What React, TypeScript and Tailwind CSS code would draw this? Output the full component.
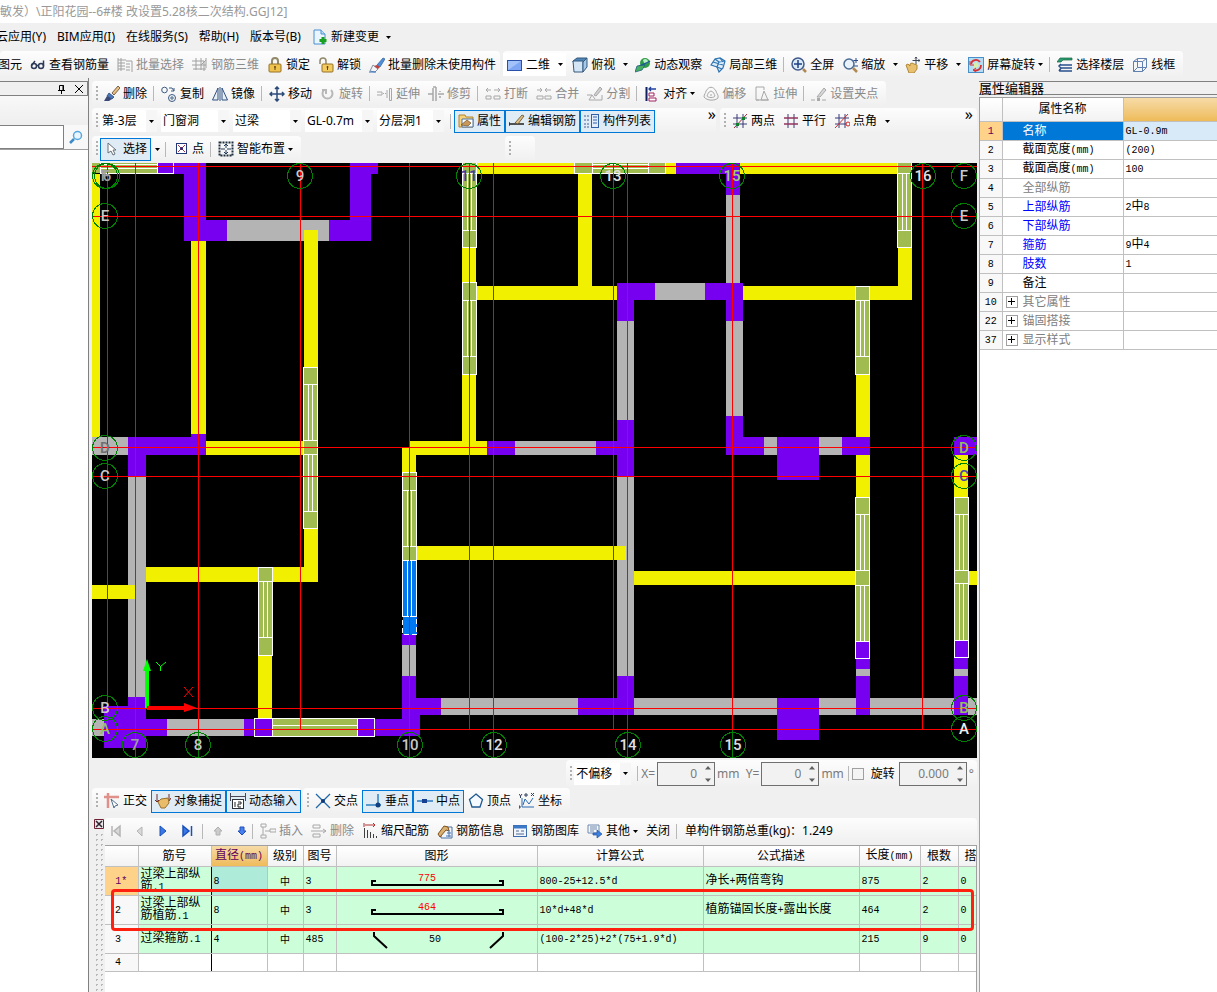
import { Fragment, type ReactNode } from 'react';
import clsx from 'clsx';

const glass = (
  <>
    <circle cx="7" cy="7" r="5" fill="#e8f2fb" stroke="#4a6a94" strokeWidth="1.5" />
    <path d="M11 11l4 4" stroke="#b08850" strokeWidth="2.5" />
  </>
);

const brush = (
  <>
    <path d="M8 7L14 0l2 2-6 7z" fill="#e8c080" stroke="#5a4030" strokeWidth=".8" />
    <path d="M5 7l5 4-2 2-5-3z" fill="#4a78b8" stroke="#244a80" strokeWidth=".8" />
    <path d="M3 10l5 3-3 2H0z" fill="#3a4a78" />
  </>
);

const grid = <path d="M5 1v14M11 1v14M1 5h14M1 11h14" stroke="#3a3a78" fill="none" />;

const icons: Record<string, ReactNode> = {
  newChange: (
    <>
      <path d="M2 1h7l4 4v10H2z" fill="#eaf5ff" stroke="#4a90d0" />
      <path d="M9 1v4h4" fill="#b8dcf8" stroke="#4a90d0" />
      <path d="M11 8v7M7.500 11.500h7" stroke="#18a020" strokeWidth="3" />
    </>
  ),
  glasses: (
    <g fill="none" stroke="#2c3a58" strokeWidth="1.5">
      <circle cx="4" cy="9" r="2.500" />
      <circle cx="11" cy="9" r="2.500" />
      <path d="M1.500 8.500L5 4M13.500 9V3.500M6.500 8.500h2" />
    </g>
  ),
  batch: (
    <path d="M1 1v13M1 3h8M1 6h7M1 9h7M1 12h7M4 1v13M9 4h6v11M9 7h4M9 10h4M9 13h4" fill="none" stroke="#a0a0a0" />
  ),
  rebar3d: (
    <path d="M0 4h12v10M4 1v12M9 1v12M14 1v10M0 8h14M1 12h13M9 8l5-5" fill="none" stroke="#a0a0a0" />
  ),
  lock: (
    <>
      <path d="M5 7V4a3 3 0 0 1 6 0v3" fill="none" stroke="#908868" strokeWidth="2" />
      <rect x="2" y="7" width="12" height="8" rx="1" fill="#efc24e" stroke="#96702a" />
      <path d="M8 9v4M7 10h2" stroke="#604010" />
    </>
  ),
  unlock: (
    <>
      <path d="M2 7V4a3 3 0 0 1 6 0v3" fill="none" stroke="#908868" strokeWidth="1.500" />
      <rect x="4" y="7" width="11" height="8" rx="1" fill="#f3cb5e" stroke="#96702a" />
      <path d="M9.500 9v4M8.500 10h2" stroke="#604010" />
    </>
  ),
  clean: (
    <>
      <path d="M8 8l6-7 2 1-5 8z" fill="#5090d8" stroke="#2a5a9a" strokeWidth=".7" />
      <path d="M4 8l5 4-3 3-5-1z" fill="#f4f4f4" stroke="#8090a8" />
      <path d="M8 8l3 2-2 2-4-3z" fill="#c04040" />
      <path d="M0 15h7" stroke="#3070c0" />
    </>
  ),
  flat: (
    <>
      <rect x=".5" y="3.500" width="14" height="10" fill="#a4c2fa" stroke="#2a50a8" />
      <path d="M1 13L14 4v9z" fill="#7ea6f4" />
    </>
  ),
  cube: (
    <>
      <path d="M1 4l4-3h10l-4 4H1z" fill="#4f86b8" stroke="#34587c" />
      <path d="M1 4h10v11H2z" fill="#d4e6f6" stroke="#34587c" />
      <path d="M11 5l4-4v9l-4 5z" fill="#a4c8e8" stroke="#34587c" />
    </>
  ),
  orbit: (
    <>
      <circle cx="10" cy="6" r="5" fill="#309c48" />
      <path d="M8 3c2-2 4-1 5 1s-3 3-4 2z" fill="#b8ecc4" />
      <path d="M2 13C2 8 9 8 15 4" stroke="#205a98" strokeWidth="1.500" fill="none" />
      <path d="M0 15l2-6 8-1-3 5z" fill="#48b060" stroke="#206080" strokeWidth=".8" />
    </>
  ),
  local3d: (
    <g fill="#dcecf8" stroke="#2f74b0" strokeWidth="1.200">
      <path d="M1 8l4-6 5-1 5 3-2 7-4 4-2-5z" />
      <path d="M5 2l4 3-2 5M10 1l3 4M3 5l10 3M9 5l6-1M9 5l-2 5 5 2" fill="none" />
    </g>
  ),
  full: (
    <>
      <circle cx="7" cy="7" r="6" fill="#dcebf8" stroke="#405a8c" strokeWidth="1.500" />
      <path d="M7 3v8M3 7h8" stroke="#204080" strokeWidth="1.500" />
      <path d="M12 12l3 3" stroke="#b08850" strokeWidth="2.500" />
    </>
  ),
  zoom: (
    <>
      {glass}
      <path d="M14 1v5M11.500 3.500h5M12 9h4" stroke="#2a4a8a" />
    </>
  ),
  pan: (
    <>
      <path d="M1 8l2-1 2 2V7l2-1 2 1 3 1v4l-3 4H4z" fill="#e8c070" stroke="#b08838" />
      <path d="M11 0v7M7.500 3.500h7M10 1.500L11 0l1 1.500M13.500 2.500l1.500 1-1.500 1" stroke="#404858" fill="none" />
    </>
  ),
  screenRotate: (
    <>
      <rect x=".5" y=".5" width="15" height="15" fill="#b4dcf4" stroke="#4a90c8" />
      <path d="M5 7l4-2 2 4-5 3z" fill="#d8f0a8" />
      <path d="M3 7a5 5 0 0 1 9-2M13 8a5 5 0 0 1-7 5" fill="none" stroke="#d83030" strokeWidth="1.800" />
      <path d="M2 4v4h4M8 11l-3 2 3 2" fill="none" stroke="#d83030" />
    </>
  ),
  floors: (
    <>
      <path d="M0 5l3-4h12v2H6L4 5z" fill="#2aa070" stroke="#186040" strokeWidth=".7" />
      <path d="M3 8h12M3 11h12M2 14h13M4 7l-2 2 2 2-2 3" stroke="#28508c" strokeWidth="1.500" fill="none" />
    </>
  ),
  wire: (
    <g fill="none" stroke="#6080b0">
      <path d="M1.500 4.500h9v10h-9zM5.500 1.500h9v9h-9zM1.500 4.500l4-3M10.500 4.500l4-3M10.500 14.500l4-4M1.500 14.500l4-4" />
    </g>
  ),
  brush,
  copy: (
    <g fill="none" stroke="#3a5a80">
      <circle cx="3.500" cy="4" r="2.800" />
      <circle cx="11" cy="12" r="3.500" />
      <circle cx="11" cy="12" r="1.200" />
      <path d="M8 2h3l2 3M13 2v3h-3" />
    </g>
  ),
  mirror: (
    <path d="M6 2v12H.500zM10 2v12h5.500zM8 1v14" fill="#e8f0f8" stroke="#305080" />
  ),
  move: (
    <path d="M8 1v14M1 8h14M6 3l2-2 2 2M6 13l2 2 2-2M3 6L1 8l2 2M13 6l2 2-2 2" fill="none" stroke="#2a4a78" strokeWidth="1.500" />
  ),
  rotate: <path d="M4 4a5 5 0 1 0 7 0M2 4h4v4" fill="none" stroke="#b8b8b8" strokeWidth="2" />,
  extend: <path d="M0 6h5v3H0M6 7.500h1M8 7.500h1M10 4v8M12.500 2.500h2v12h-2z" fill="none" stroke="#a8a8a8" />,
  trim: <path d="M0 8h5M5 2v13M8 1v14M10 8h6M12 5v1M12 10v2M5 1h3" fill="none" stroke="#a8a8a8" strokeWidth="1.500" />,
  breakIt: (
    <path d="M1 4h5M3 2L1 4l2 2M9 4h6M13 2l2 2-2 2M1 10h5v3H1zM9 10h6v3H9z" fill="none" stroke="#a8a8a8" />
  ),
  join: (
    <path d="M1 4h5M4 2l2 2-2 2M9 4h6M11 2L9 4l2 2M1 10h6v3H1zM9 10h6v3H9z" fill="none" stroke="#a8a8a8" />
  ),
  split: (
    <>
      <path d="M0 9h5l-3 5h13V9M5 9l3 4" fill="none" stroke="#a8a8a8" />
      <path d="M7 9l6-8 2 2-6 7z" fill="#d0d0d0" stroke="#a8a8a8" />
    </>
  ),
  align: (
    <>
      <path d="M2.500 1v14" stroke="#102060" strokeWidth="2" />
      <path d="M5 7h5v3H5zM5 12h7v3H5z" fill="#fff" stroke="#a02060" />
      <path d="M12 3H5M7 1L5 3l2 2" fill="none" stroke="#2040a0" strokeWidth="1.300" />
    </>
  ),
  offset: (
    <g fill="none" stroke="#a8a8a8">
      <path d="M1 11c0-3 2-4 2-6 3-5 7-5 10 0 0 2 3 4 2 7-3 3-11 3-14-1z" />
      <path d="M4 10c1-2 1-4 4-5 3 1 3 3 4 5-1 2-7 2-8 0zM7 9h2" />
    </g>
  ),
  stretch: <path d="M2 1h8v3M2 1v13h3M7 14l3-9 4 9zM2 14h13" fill="none" stroke="#a8a8a8" />,
  grip: (
    <>
      <path d="M0 14h4M11 14h4" stroke="#a8a8a8" />
      <rect x="6" y="12" width="3" height="3" fill="#a8a8a8" />
      <path d="M6 11l7-9 2 2-6 7z" fill="#d8d8d8" stroke="#a8a8a8" />
    </>
  ),
  props: (
    <>
      <path d="M1 2h6l1 2h7v10H1z" fill="#f7d27a" stroke="#b08430" />
      <path d="M4 6h11v8H4z" fill="#fff" stroke="#50709c" />
      <path d="M3 12l6-5 4 3-3 3z" fill="#c89858" stroke="#705028" strokeWidth=".7" />
    </>
  ),
  editRebar: (
    <>
      <path d="M0 11h15M0 9v4" stroke="#202020" strokeWidth="1.300" />
      <path d="M6 10l7-8 2 1-6 8z" fill="#e0c080" stroke="#604828" strokeWidth=".8" />
    </>
  ),
  list: (
    <>
      <path d="M0 3h2M3 3h2M0 7h2M3 7h2M0 11h2M3 11h2M0 14h2M3 14h2" stroke="#4060a0" />
      <rect x="7.500" y="1.500" width="7" height="13" fill="#e0ecfa" stroke="#3060a8" />
      <path d="M9 4h4M9 7h4M9 10h4" stroke="#3060a8" />
    </>
  ),
  twoPoints: (
    <>
      {grid}
      <path d="M2 15L15 1" stroke="#a03030" />
      <path d="M4 10h3v3H4zM10 4h3v3h-3z" fill="#108030" />
    </>
  ),
  parallel: (
    <>
      {grid}
      <path d="M1 5h14M1 11h14" stroke="#c03050" />
    </>
  ),
  pointAngle: (
    <>
      {grid}
      <path d="M1 15L14 1" stroke="#d03030" />
      <circle cx="14" cy="11" r="2" fill="#fff" stroke="#d02020" />
    </>
  ),
  cursor: <path d="M4 2v10l3-2 2 4 2-1-2-4h3z" fill="#fff" stroke="#687078" />,
  point: (
    <>
      <rect x="3.500" y="2.500" width="10" height="10" fill="#fff" stroke="#203878" />
      <path d="M5 4l7 7M12 4l-7 7" stroke="#a83050" />
      <circle cx="8.500" cy="7.500" r="1.500" fill="#202878" />
    </>
  ),
  smart: (
    <>
      <rect x="1.500" y="1.500" width="13" height="13" fill="none" stroke="#203040" strokeWidth="2" strokeDasharray="2 1" />
      <path d="M8 3v4M8 9v4M3 8h4M9 8h4M6 5l2-2 2 2M6 11l2 2 2-2" stroke="#203858" fill="none" />
    </>
  ),
  ortho: (
    <>
      <path d="M0 4h15M4 0v15" stroke="#e09088" strokeWidth="2.500" />
      <path d="M7 6l7 6-3 1-1 2z" fill="#fff" stroke="#50708c" />
    </>
  ),
  snap: (
    <>
      <path d="M2 1v8M14 1v6M0 7l2 2 2-2M11 5l3 3 2-3" stroke="#702828" fill="none" />
      <path d="M3 9l3-3 7-1 1 5-4 5H6z" fill="#e8bc68" stroke="#9a7030" />
    </>
  ),
  dynInput: (
    <>
      <path d="M.500 0v8M15.500 0v8M0 3.500h16" stroke="#484858" />
      <rect x="2.500" y="6.500" width="11" height="9" fill="#fff" stroke="#303038" />
      <path d="M5 9v5M8 9h3v2H8v3h3" stroke="#202020" fill="none" />
    </>
  ),
  cross: (
    <>
      <path d="M1 1l14 14M15 1L1 15" stroke="#2068a8" strokeWidth="1.300" />
      <circle cx="8" cy="8" r="2" fill="#103878" />
    </>
  ),
  perp: (
    <>
      <path d="M0 12h15M12 1v11" stroke="#3080c0" strokeWidth="1.500" />
      <circle cx="12" cy="12" r="2.500" fill="#104080" />
    </>
  ),
  mid: (
    <>
      <path d="M0 8h16" stroke="#2878c0" strokeWidth="1.500" />
      <rect x="5" y="6" width="5" height="4" fill="#184090" />
    </>
  ),
  vertex: <path d="M8 1l6.500 5.500L12 14H4L1.500 6.500z" fill="#f4faff" stroke="#205890" strokeWidth="1.300" />,
  coord: (
    <>
      <path d="M3 5v9M3 14h12M4 12l2-6 4 5 4-6" fill="none" stroke="#2868b0" />
      <path d="M0 1l1.500 2L3 1M1.500 3v2M12 0l3 3M15 0l-3 3M6 1h2v2H6zM0 13h1v2H0z" fill="none" stroke="#304060" />
    </>
  ),
  first: <path d="M4 3v10M12 3L6 8l6 5z" fill="#d8d8d8" stroke="#b4b4b4" strokeWidth="1.500" />,
  prev: <path d="M10 4L5 8l5 5z" fill="#d8d8d8" stroke="#b4b4b4" />,
  next: <path d="M4 3l6 5-6 5z" fill="#3a78e8" stroke="#1850b8" />,
  last: <path d="M3 3l6 5-6 5zM11.500 3v10" fill="#3a78e8" stroke="#1850b8" strokeWidth="1.500" />,
  up: <path d="M8 4l4 4h-2v4H6V8H4z" fill="#ccc" stroke="#b0b0b0" />,
  down: <path d="M8 12l4-4h-2V4H6v4H4z" fill="#4880f0" stroke="#2050b8" />,
  insert: <path d="M1 1h5v3H1zM1 12h5v3H1zM3 4v8M5 8h5M10 6h6v3h-6z" fill="none" stroke="#a8a8a8" />,
  remove: <path d="M2 2h7v3H2zM0 8h15M12 6l3 2-3 2M2 11h7v3H2z" fill="none" stroke="#a8a8a8" />,
  scale: (
    <>
      <path d="M3 2h10M11 0l2 2-2 2M2 0v4" fill="none" stroke="#b03030" />
      <path d="M2.500 5v10M5.500 7v8M8.500 9v6M11.500 11v4M14.500 13v2" stroke="#404040" />
    </>
  ),
  info: (
    <>
      <path d="M8 4h7v11H4V9" fill="#eef4fc" stroke="#4870a8" />
      <path d="M1 11l6-8 4 1 1 4-3-1-6 7z" fill="#d8b070" stroke="#805018" />
      <path d="M10 10h4M9 13h5M12 7v7" stroke="#4870a8" />
    </>
  ),
  library: (
    <>
      <rect x="1.500" y="2.500" width="13" height="11" fill="#f0f6fc" stroke="#3c6cae" />
      <path d="M1 4h14" stroke="#3c78c8" strokeWidth="3" />
      <path d="M4 8h3M9 8h3M4 11h8" stroke="#506890" />
    </>
  ),
  other: (
    <>
      <path d="M1 2h11v8H1zM3 4h7M3 6h7M3 8h4" fill="#f4f8fc" stroke="#7088b0" />
      <path d="M6 10h4V7l5 4-5 4v-3H6z" fill="#3c80e0" stroke="#1c50a0" strokeWidth=".7" />
    </>
  ),
};

function Icon({ name }: { name: string }) {
  return (
    <svg viewBox="0 0 16 16" className="size-4 shrink-0" aria-hidden="true">
      {icons[name]}
    </svg>
  );
}

function Arrow() {
  return (
    <svg viewBox="0 0 5 3" className="h-[3px] w-[5px] shrink-0" aria-hidden="true">
      <path d="M0 0h5L2.500 3z" fill="#000" />
    </svg>
  );
}

interface ToolProps {
  icon?: string;
  label?: string;
  title?: string;
  active?: boolean;
  disabled?: boolean;
  menu?: 'tight' | 'split';
}

function Tool({ icon, label, title, active, disabled, menu }: ToolProps) {
  return (
    <>
      <button
        aria-label={label ? undefined : title}
        disabled={disabled}
        className={clsx(
          'flex h-[23px] shrink-0 items-center gap-[3px] border px-[3px]',
          active ? 'border-[#0078d7] bg-[#dfebf5]' : 'border-transparent',
          disabled && 'text-[#8a8a8a]',
        )}
      >
        {icon && <Icon name={icon} />}
        {label}
        {menu === 'tight' && <Arrow />}
      </button>
      {menu === 'split' && (
        <button aria-label={`${label}选项`} className="flex h-[23px] w-3 shrink-0 items-center justify-center">
          <Arrow />
        </button>
      )}
    </>
  );
}

function Sep() {
  return <span className="mx-[2px] h-[15px] w-[2px] shrink-0 border-l border-[#b8b8b8]" />;
}

function Grip() {
  return (
    <svg viewBox="0 0 8 16" className="h-4 w-2 shrink-0" aria-hidden="true">
      <path d="M5 0v16" stroke="#b0b0b0" strokeWidth="2" strokeDasharray="2 2" />
    </svg>
  );
}

function Bar({ className, children }: { className?: string; children?: ReactNode }) {
  return (
    <div className={clsx('flex items-center rounded-sm bg-linear-to-b from-[#fdfdfd] to-[#f0f0f0]', className)}>
      {children}
    </div>
  );
}

function Combo({ label, value, className }: { label: string; value: string; className: string }) {
  return (
    <label className={clsx('mr-1 flex h-[22px] shrink-0 bg-white', className)}>
      <select aria-label={label} className="min-w-0 flex-1 appearance-none pl-[2px] outline-none">
        <option>{value}</option>
      </select>
      <span className="flex w-[11px] items-center justify-center bg-[#f6f6f6]">
        <Arrow />
      </span>
    </label>
  );
}

function Spin({ label, value, className }: { label: string; value: string; className: string }) {
  return (
    <span className={clsx('flex h-6 shrink-0 items-center border border-[#707070] bg-[#f2f2f2] text-[#7a7a7a]', className)}>
      <input aria-label={label} defaultValue={value} className="w-0 flex-1 text-right outline-none" />
      <svg viewBox="0 0 17 22" className="h-[22px] w-[17px]" aria-hidden="true">
        <path d="M8 6.500h6L11 3zM8 15.500h6L11 19z" fill="#606060" />
      </svg>
    </span>
  );
}

// CJK glyphs are 12px wide, latin ones half of that
function Song({ text }: { text: string }) {
  return (
    <>
      {text.split(/([ -~]+)/).map((part, i) =>
        /^[ -~]+$/.test(part) ? (
          <span key={i} className="font-['Liberation_Mono',monospace] text-[10px]">{part}</span>
        ) : (
          <Fragment key={i}>{part}</Fragment>
        ),
      )}
    </>
  );
}

const YELLOW = '#f0f000';
const PURPLE = '#7800f0';
const GRAY = '#b4b4b4';
const OLIVE = '#a0bc50';
const BLUE = '#0078f0';

// [x1, y1, x2, y2]
type Box = [number, number, number, number];

const walls: [string, Box[]][] = [
  [GRAY, [
    [227, 220, 329, 241], [92, 437, 128, 455], [128, 476, 146, 697], [92, 719, 104, 736], [167, 719, 244, 736],
    [402, 645, 416, 676], [441, 698, 578, 715], [617, 476, 634, 676], [515, 441, 596, 455], [617, 321, 634, 420],
    [655, 283, 705, 300], [726, 195, 740, 283], [726, 321, 743, 416], [764, 437, 777, 455], [819, 437, 842, 455],
    [634, 698, 977, 715], [856, 669, 870, 676], [954, 669, 968, 676],
  ]],
  [YELLOW, [
    [92, 174, 100, 437], [191, 241, 206, 434], [206, 441, 304, 455], [304, 230, 318, 582], [146, 567, 318, 582],
    [92, 585, 135, 599], [258, 655, 272, 719], [402, 448, 416, 472], [410, 441, 487, 455], [416, 546, 626, 560],
    [634, 571, 856, 585], [462, 247, 476, 441], [477, 163, 676, 174], [740, 163, 897, 174], [578, 174, 592, 286],
    [477, 286, 617, 300], [743, 286, 912, 300], [898, 247, 912, 300], [856, 374, 870, 497], [954, 455, 968, 497],
    [968, 571, 977, 585],
  ]],
  [PURPLE, [
    [157, 163, 206, 174], [184, 163, 206, 241], [184, 220, 227, 241], [329, 220, 371, 241], [350, 163, 371, 241],
    [350, 163, 378, 174], [191, 434, 206, 455], [128, 437, 206, 455], [128, 455, 146, 476], [128, 697, 146, 748],
    [104, 706, 146, 748], [104, 719, 167, 736], [244, 719, 420, 736], [402, 634, 416, 645], [402, 676, 416, 720],
    [402, 698, 441, 715], [402, 714, 420, 736], [578, 698, 634, 715], [617, 676, 634, 715], [487, 441, 515, 455],
    [596, 441, 634, 455], [617, 420, 634, 476], [617, 283, 634, 321], [617, 283, 655, 300], [705, 283, 743, 300],
    [726, 283, 743, 321], [726, 416, 743, 455], [726, 437, 764, 455], [777, 437, 819, 480], [842, 437, 870, 455],
    [676, 163, 740, 174], [726, 163, 740, 195], [856, 641, 870, 669], [856, 676, 870, 715], [954, 437, 977, 455],
    [954, 640, 968, 669], [954, 676, 968, 715], [777, 698, 819, 740],
  ]],
];

// outlined blocks and glazed spans
const blocks: [Box, string][] = [
  [[157, 162, 173, 173], PURPLE], [[303, 367, 317, 384], OLIVE], [[303, 440, 317, 454], OLIVE],
  [[303, 511, 317, 528], OLIVE], [[258, 567, 272, 581], OLIVE], [[258, 637, 272, 655], OLIVE],
  [[254, 718, 272, 736], PURPLE], [[357, 718, 374, 736], PURPLE], [[402, 472, 416, 490], OLIVE],
  [[402, 546, 416, 560], OLIVE], [[462, 162, 476, 173], OLIVE], [[462, 230, 476, 247], OLIVE],
  [[462, 282, 476, 300], OLIVE], [[462, 356, 476, 374], OLIVE], [[574, 162, 592, 173], OLIVE],
  [[648, 162, 665, 173], OLIVE], [[897, 162, 911, 173], OLIVE], [[897, 230, 911, 247], OLIVE],
  [[855, 286, 869, 300], OLIVE], [[855, 356, 869, 374], OLIVE], [[855, 497, 869, 514], OLIVE],
  [[855, 570, 869, 585], OLIVE], [[855, 641, 869, 658], PURPLE], [[954, 497, 968, 514], OLIVE],
  [[954, 570, 968, 583], OLIVE], [[954, 640, 968, 657], PURPLE],
];

const windows: [Box, string][] = [
  [[303, 384, 317, 440], OLIVE], [[303, 454, 317, 511], OLIVE], [[258, 581, 272, 637], OLIVE],
  [[402, 490, 416, 546], OLIVE], [[402, 560, 416, 616], BLUE], [[462, 173, 476, 230], OLIVE],
  [[462, 300, 476, 356], OLIVE], [[897, 173, 911, 230], OLIVE], [[855, 300, 869, 356], OLIVE],
  [[855, 514, 869, 570], OLIVE], [[855, 585, 869, 641], OLIVE], [[954, 514, 968, 570], OLIVE],
  [[954, 583, 968, 640], OLIVE],
];

const LIGHT = '#c8c8c8';
const bubbles: [number, number, string, string][] = [
  [105, 176, 'F', '#a0a0a0'], [107, 176, '6', '#a0a0a0'], [105, 216, 'E', LIGHT], [105, 448, 'D', '#707070'],
  [105, 476, 'C', LIGHT], [105, 708, 'B', LIGHT], [105, 729, 'A', '#90c060'],
  [964, 176, 'F', LIGHT], [964, 216, 'E', LIGHT], [964, 448, 'D', '#90c060'], [964, 476, 'C', '#4848b0'],
  [964, 708, 'B', '#90c060'], [964, 729, 'A', '#f0f0f0'],
  [300, 176, '9', LIGHT], [469, 176, '11', '#4438a0'], [613, 176, '13', '#e0e0e0'], [732, 176, '15', '#a0c880'],
  [923, 176, '16', '#e0e0e0'],
  [135, 745, '7', '#a0a0a0'], [198, 745, '8', LIGHT], [410, 745, '10', LIGHT], [494, 745, '12', '#e0e0e0'],
  [628, 745, '14', '#e0e0e0'], [733, 745, '15', '#e0e0e0'],
];

const axesX = [107, 135, 198, 300, 409, 469, 493, 613, 627, 732, 922];
const axesY = [166, 216, 447, 476, 708, 729];

function Plan() {
  return (
    <svg viewBox="92 163 885 595" className="block w-full bg-black" role="img" aria-label="结构平面图">
      <g shapeRendering="crispEdges">
        {walls.map(([fill, boxes]) =>
          boxes.map(([x1, y1, x2, y2]) => (
            <rect key={`${fill}${x1}-${y1}-${x2}-${y2}`} x={x1} y={y1} width={x2 - x1} height={y2 - y1} fill={fill} />
          )),
        )}
        {windows.map(([[x1, y1, x2, y2], fill]) => (
          <g key={`${x1}-${y1}`} fill={fill} stroke="#fff">
            <rect x={x1 + 0.5} y={y1 + 0.5} width={x2 - x1} height={y2 - y1} />
            <path d={`M${x1 + 5.5} ${y1}V${y2}M${x1 + 9.5} ${y1}V${y2}`} />
          </g>
        ))}
        {blocks.map(([[x1, y1, x2, y2], fill]) => (
          <rect key={`${x1}-${y1}`} x={x1 + 0.5} y={y1 + 0.5} width={x2 - x1} height={y2 - y1} fill={fill} stroke="#fff" />
        ))}
        <rect x="402.500" y="616.500" width="14" height="18" fill={BLUE} stroke="#fff" strokeDasharray="5 3" />
        <path d="M92 163h65v10H92z" fill={OLIVE} />
        <path d="M100 164.500h57M100 168.500h57M100 173.500h57M100.500 163v10M157.500 163v10" stroke="#fff" />
        <path d="M592 163h56v10H592z" fill={OLIVE} />
        <path d="M592 164.500h56M592 168.500h56M592 173.500h56M592.500 163v10M648.500 163v10" stroke="#fff" />
        <path d="M272.500 718.500h85v18h-85zM272 725.500h85" fill={OLIVE} stroke="#fff" />
        {axesX.map((x) => (
          <path key={x} d={`M${x + 0.5} 163V729`} stroke="#f00" />
        ))}
        {axesY.map((y) => (
          <path key={y} d={`M92 ${y + 0.5}H977`} stroke="#f00" />
        ))}
        {[135, 198, 409, 493, 627, 732].map((x) => (
          <path key={x} d={`M${x + 0.5} 730V758`} stroke="#008000" />
        ))}
      </g>
      {bubbles.map(([x, y, label, fill]) => (
        <g key={`${x}-${y}`}>
          <circle cx={x} cy={y} r="12.500" fill="none" stroke="#008000" shapeRendering="crispEdges" />
          <text x={x} y={y + 5} fill={fill} textAnchor="middle" className="font-[Roboto,sans-serif] text-[15px] font-medium">
            {label}
          </text>
        </g>
      ))}
      <path d="M145 708V671h-2l4-12 4 12h-2v37z" fill="#0f0" />
      <path d="M147 706h37v-3l13 5-13 4v-2h-37z" fill="#f00" />
      <path d="M156 662l4.500 4.500L166 662M160.500 666v5" stroke="#0f0" fill="none" />
      <path d="M184 687l9 10M193 687l-9 10" stroke="#f00" />
    </svg>
  );
}

const properties: { no: string; name: string; value?: string; tone?: string; group?: boolean }[] = [
  { no: '1', name: '名称', value: 'GL-0.9m', tone: 'text-white' },
  { no: '2', name: '截面宽度(mm)', value: '(200)' },
  { no: '3', name: '截面高度(mm)', value: '100' },
  { no: '4', name: '全部纵筋', tone: 'text-[#808080]' },
  { no: '5', name: '上部纵筋', value: '2中8', tone: 'text-[#0000ff]' },
  { no: '6', name: '下部纵筋', tone: 'text-[#0000ff]' },
  { no: '7', name: '箍筋', value: '9中4', tone: 'text-[#0000ff]' },
  { no: '8', name: '肢数', value: '1', tone: 'text-[#0000ff]' },
  { no: '9', name: '备注' },
  { no: '10', name: '其它属性', tone: 'text-[#808080]', group: true },
  { no: '22', name: '锚固搭接', tone: 'text-[#808080]', group: true },
  { no: '37', name: '显示样式', tone: 'text-[#808080]', group: true },
];

function PropertyPanel() {
  return (
    <aside className="flex w-[238px] shrink-0 flex-col pt-[3px]">
      <h2 className="mb-[2px] h-[14px] border-y border-[#808080] text-[13px] leading-3">属性编辑器</h2>
      <div className="flex-1 border-t border-l border-[#a0a0a0] bg-white">
        <table className="w-full table-fixed border-collapse">
          <colgroup>
            <col className="w-[22px]" />
            <col className="w-[121px]" />
            <col />
          </colgroup>
          <thead>
            <tr className="h-[23px]">
              <th className="border-r border-b border-[#c0c0c0] bg-linear-to-b from-white to-[#f2f2f2]" aria-label="序号" />
              <th className="border-r border-b border-[#c0c0c0] bg-linear-to-b from-white to-[#f2f2f2] font-normal">属性名称</th>
              <th className="border-b border-[#c0c0c0] bg-linear-to-b from-[#f6dba6] to-[#eebb58]" aria-label="属性值" />
            </tr>
          </thead>
          <tbody>
            {properties.map(({ no, name, value, tone, group }) => (
              <tr key={no} className="h-[19px] leading-[14px]">
                <td className={clsx('border-r border-b border-[#c0c0c0] text-center', no === '1' ? 'bg-[#ffd28a] text-[#600060]' : 'bg-[#f8f8f8]')}>
                  <Song text={no} />
                </td>
                <td className={clsx('border-r border-b border-[#c0c0c0]', no === '1' && 'bg-[#0078d7]', tone)}>
                  <span className="flex items-center">
                    <span className="flex w-5 pl-[3px]">
                      {group && (
                        <button aria-label={`展开${name}`} className="flex size-3 items-center justify-center border border-[#a0a0a0] bg-white">
                          <svg viewBox="0 0 7 7" className="size-[7px]" aria-hidden="true">
                            <path d="M0 3.500h7M3.500 0v7" stroke="#000" />
                          </svg>
                        </button>
                      )}
                    </span>
                    <span><Song text={name} /></span>
                  </span>
                </td>
                <td className={clsx('border-b border-[#c0c0c0] pl-[2px]', no === '1' && 'bg-[#d8e9f8]')}>
                  {value && <Song text={value} />}
                </td>
              </tr>
            ))}
          </tbody>
        </table>
      </div>
    </aside>
  );
}

const rebars = [
  { no: '1*', name: '过梁上部纵筋.1', dia: '8', shape: '3', len: '775', formula: '800-25+12.5*d', note: '净长+两倍弯钩', total: '875', count: '2' },
  { no: '2', name: '过梁上部纵筋植筋.1', dia: '8', shape: '3', len: '464', formula: '10*d+48*d', note: '植筋锚固长度+露出长度', total: '464', count: '2' },
  { no: '3', name: '过梁箍筋.1', dia: '4', shape: '485', len: '50', formula: '(100-2*25)+2*(75+1.9*d)', note: '', total: '215', count: '9' },
];

const cell = 'border-r border-b border-[#c0c0c0]';

function Shape({ kind, len }: { kind: string; len: string }) {
  return (
    <svg viewBox="0 0 200 28" className="block h-7 w-full" aria-label={`图形 ${len}`}>
      {kind === '3' ? (
        <path d="M39 14h-4v4h131v-4h-4" fill="none" stroke="#000" strokeWidth="2" />
      ) : (
        <path d="M37 7v4l13 12M166 7v4l-13 12" fill="none" stroke="#000" strokeWidth="2" />
      )}
      <text x={kind === '3' ? 90 : 98} y={kind === '3' ? 14 : 17} textAnchor="middle" fill={kind === '3' ? '#f00' : '#000'} className="font-['Liberation_Mono',monospace] text-[10px]">
        {len}
      </text>
    </svg>
  );
}

function RebarTable() {
  const heads = ['', '筋号', '直径(mm)', '级别', '图号', '图形', '计算公式', '公式描述', '长度(mm)', '根数'];
  return (
    <div className="relative flex-1 border-t border-r border-[#a0a0a0] bg-white">
      <table className="w-full table-fixed border-collapse">
        <colgroup>
          <col className="w-[33px]" />
          <col className="w-[73px]" />
          <col className="w-[56px]" />
          <col className="w-[36px]" />
          <col className="w-[33px]" />
          <col className="w-[201px]" />
          <col className="w-[166px]" />
          <col className="w-[156px]" />
          <col className="w-[61px]" />
          <col className="w-[38px]" />
          <col />
        </colgroup>
        <thead>
          <tr className="h-[20px] leading-4">
            {heads.map((head) => (
              <th
                key={head}
                className={clsx(
                  cell,
                  'bg-linear-to-b font-normal whitespace-nowrap',
                  head === '直径(mm)' ? 'from-[#f6dba6] to-[#eebb58] text-[#600060]' : 'from-white to-[#f2f2f2]',
                )}
              >
                <Song text={head} />
              </th>
            ))}
            <th className="overflow-hidden border-b border-[#c0c0c0] bg-linear-to-b from-white to-[#f2f2f2] pl-[6px] text-left font-normal whitespace-nowrap">
              搭接
            </th>
          </tr>
        </thead>
        <tbody>
          {rebars.map((bar, i) => (
            <tr key={bar.no} className="h-[29px] bg-[#ccffd9] leading-3">
              <td className={clsx(cell, i === 0 ? 'bg-[#ffd28a] text-center text-[#600060]' : 'bg-[#f8f8f8] pl-[10px]')}>
                <Song text={bar.no} />
              </td>
              <td className={clsx(cell, 'border-r-black pl-[2px] whitespace-normal')}>
                <Song text={bar.name} />
              </td>
              <td className={clsx(cell, 'pl-[2px]', i === 0 && 'bg-[#aeebd8]')}>
                <Song text={bar.dia} />
              </td>
              <td className={clsx(cell, 'text-center text-[10px]')}>中</td>
              <td className={clsx(cell, 'pl-[2px]')}>
                <Song text={bar.shape} />
              </td>
              <td className={cell}>
                <Shape kind={bar.shape} len={bar.len} />
              </td>
              <td className={clsx(cell, 'pl-[2px] whitespace-nowrap')}>
                <Song text={bar.formula} />
              </td>
              <td className={clsx(cell, 'pl-[2px]')}>
                <Song text={bar.note} />
              </td>
              <td className={clsx(cell, 'pl-[2px]')}>
                <Song text={bar.total} />
              </td>
              <td className={clsx(cell, 'pl-[2px]')}>
                <Song text={bar.count} />
              </td>
              <td className="border-b border-[#c0c0c0] pl-[2px]">
                <Song text="0" />
              </td>
            </tr>
          ))}
          <tr className="h-[18px] leading-3">
            <td className={clsx(cell, 'bg-[#f8f8f8] pl-[10px]')}>
              <Song text="4" />
            </td>
            <td className={clsx(cell, 'border-r-black')} />
            {heads.slice(2).map((head) => (
              <td key={head} className={cell} />
            ))}
            <td className="border-b border-[#c0c0c0]" />
          </tr>
        </tbody>
      </table>
      {/* highlighted bar */}
      <div className="absolute top-[43px] right-[2px] left-[6px] h-[42px] rounded-[4px] border-[3px] border-[#ff2010]" />
    </div>
  );
}

export default function App() {
  return (
    <div className="flex min-h-screen flex-col overflow-hidden bg-[#f0f0f0] font-['Noto_Sans','Noto_Sans_CJK_SC',sans-serif] text-[12px] whitespace-nowrap text-black">
      <header className="h-[23px] bg-white leading-6 text-[#999]">
        <h1>敏发）\正阳花园--6#楼 改设置5.28核二次结构.GGJ12]</h1>
      </header>

      <nav className="-ml-1 flex h-7 items-center gap-[11px]">
        <button>云应用(Y)</button>
        <button>BIM应用(I)</button>
        <button>在线服务(S)</button>
        <button>帮助(H)</button>
        <button>版本号(B)</button>
        <button className="flex items-center gap-[3px]">
          <Icon name="newChange" />
          新建变更
          <span className="pl-1"><Arrow /></span>
        </button>
      </nav>

      <div className="flex h-[27px] gap-[3px]">
        <Bar>
          <span className="-ml-[6px] flex">
            <Tool label="图元" />
          </span>
          <Tool icon="glasses" label="查看钢筋量" />
          <Tool icon="batch" label="批量选择" disabled />
          <Tool icon="rebar3d" label="钢筋三维" disabled />
          <Tool icon="lock" label="锁定" />
          <Tool icon="unlock" label="解锁" />
          <Tool icon="clean" label="批量删除未使用构件" />
        </Bar>
        <Bar className="pr-1">
          <span className="mr-[2px] flex bg-white">
            <Tool icon="flat" label="二维" menu="split" />
          </span>
          <Tool icon="cube" label="俯视" menu="split" />
          <Tool icon="orbit" label="动态观察" />
          <Tool icon="local3d" label="局部三维" />
          <Sep />
          <Tool icon="full" label="全屏" />
          <Tool icon="zoom" label="缩放" menu="split" />
          <Tool icon="pan" label="平移" menu="split" />
          <Tool icon="screenRotate" label="屏幕旋转" menu="tight" />
          <Sep />
          <Tool icon="floors" label="选择楼层" />
          <Tool icon="wire" label="线框" />
        </Bar>
      </div>

      <div className="flex flex-1">
        <aside className="mr-[3px] flex w-[89px] shrink-0 flex-col border-r border-[#808080] pt-[3px]">
          <div className="flex h-[15px] items-center justify-end gap-[9px] border border-l-0 border-[#808080] pr-1">
            <button aria-label="固定">
              <svg viewBox="0 0 9 10" className="block h-[10px] w-[9px]">
                <path d="M2.500 6V1.500h4V6M6 1v5M1 6.500h7M4.500 7v3" stroke="#000" fill="none" />
              </svg>
            </button>
            <button aria-label="关闭面板">
              <svg viewBox="0 0 8 8" className="block size-2">
                <path d="M0 0l8 8M8 0L0 8" stroke="#000" />
              </svg>
            </button>
          </div>
          <div className="h-7 bg-linear-to-b from-[#f8f8f8] to-[#efefef]" />
          <div className="flex h-[26px] items-center border-b border-[#a0a0a0]">
            <input aria-label="搜索构件" className="h-6 w-16 border border-l-0 border-[#808080] bg-white outline-none" />
            <button aria-label="搜索" className="flex h-6 flex-1 items-center justify-center bg-[#f8f8f8]">
              <svg viewBox="0 0 14 14" className="size-[14px]">
                <path d="M1 13l4-4" stroke="#3c8cc8" strokeWidth="2.500" />
                <circle cx="8.500" cy="5.500" r="4" fill="#eaf6ff" stroke="#58a8e0" strokeWidth="1.500" />
              </svg>
            </button>
          </div>
          <div className="flex-1 bg-white" />
        </aside>

        <main className="flex min-w-0 flex-1 flex-col">
          <div className="mt-[3px] flex h-[25px]">
            <Bar className="pr-1">
              <Grip />
              <Tool icon="brush" label="删除" />
              <Sep />
              <Tool icon="copy" label="复制" />
              <Tool icon="mirror" label="镜像" />
              <Sep />
              <Tool icon="move" label="移动" />
              <Tool icon="rotate" label="旋转" disabled />
              <Sep />
              <Tool icon="extend" label="延伸" disabled />
              <Tool icon="trim" label="修剪" disabled />
              <Sep />
              <Tool icon="breakIt" label="打断" disabled />
              <Tool icon="join" label="合并" disabled />
              <Tool icon="split" label="分割" disabled />
              <Sep />
              <Tool icon="align" label="对齐" menu="tight" />
              <Tool icon="offset" label="偏移" disabled />
              <Tool icon="stretch" label="拉伸" disabled />
              <Sep />
              <Tool icon="grip" label="设置夹点" disabled />
            </Bar>
          </div>

          <div className="mt-[2px] flex h-[26px] gap-1">
            <Bar className="w-[624px]">
              <Grip />
              <Combo label="楼层" value="第-3层" className="w-[57px]" />
              <Combo label="构件类别" value="门窗洞" className="w-[68px]" />
              <Combo label="构件类型" value="过梁" className="w-[68px]" />
              <Combo label="构件名称" value="GL-0.7m" className="w-[68px]" />
              <Combo label="分层" value="分层洞1" className="w-[67px]" />
              <Sep />
              <Tool icon="props" label="属性" active />
              <Tool icon="editRebar" label="编辑钢筋" active />
              <Tool icon="list" label="构件列表" active />
              <button aria-label="更多" className="ml-auto self-start text-[16px] leading-3">»</button>
            </Bar>
            <Bar className="flex-1">
              <Grip />
              <Tool icon="twoPoints" label="两点" />
              <Tool icon="parallel" label="平行" />
              <Tool icon="pointAngle" label="点角" menu="split" />
              <button aria-label="更多" className="ml-auto self-start pr-1 text-[16px] leading-3">»</button>
            </Bar>
          </div>

          <div className="mt-[2px] mb-[1px] flex h-[26px]">
            <Bar className="pr-1">
              <Grip />
              <Tool icon="cursor" label="选择" active />
              <button aria-label="选择方式" className="flex h-[23px] w-3 items-center justify-center">
                <Arrow />
              </button>
              <Sep />
              <Tool icon="point" label="点" />
              <Sep />
              <Tool icon="smart" label="智能布置" menu="tight" />
            </Bar>
            <Bar className="ml-[204px] w-[30px]">
              <Grip />
            </Bar>
          </div>

          <Plan />

          <div className="mt-[2px] flex h-[27px] justify-end">
            <Bar className="pr-[3px]">
              <Grip />
              <Combo label="偏移方式" value="不偏移" className="w-[57px]" />
              <Sep />
              <span className="text-[#7a7a7a]">X=</span>
              <Spin label="X" value="0" className="mx-[2px] w-[58px]" />
              <span className="text-[#7a7a7a]">mm&nbsp;&nbsp;Y=</span>
              <Spin label="Y" value="0" className="mx-[2px] w-[58px]" />
              <span className="pr-[2px] text-[#7a7a7a]">mm</span>
              <Sep />
              <label className="flex items-center gap-[7px] pr-1">
                <input type="checkbox" className="size-3 appearance-none border border-[#a0a0a0] bg-[#f4f4f4]" />
                旋转
              </label>
              <Spin label="旋转角度" value="0.000" className="w-[68px]" />
              <span className="pl-[2px] text-[#7a7a7a]">°</span>
            </Bar>
          </div>

          <div className="mt-[1px] flex h-[26px]">
            <Bar>
              <Grip />
              <Tool icon="ortho" label="正交" />
              <Tool icon="snap" label="对象捕捉" active />
              <Tool icon="dynInput" label="动态输入" active />
            </Bar>
            <Bar className="ml-[2px] pr-1">
              <Grip />
              <Tool icon="cross" label="交点" />
              <Tool icon="perp" label="垂点" active />
              <Tool icon="mid" label="中点" active />
              <Tool icon="vertex" label="顶点" />
              <Tool icon="coord" label="坐标" />
            </Bar>
          </div>

          <div className="mt-1 flex flex-1">
            <div className="flex w-[13px] shrink-0 flex-col items-center pt-[1px]">
              <button aria-label="关闭钢筋表">
                <svg viewBox="0 0 10 10" className="block size-[10px]">
                  <path d="M.500.500h9v9h-9z" fill="#e8e8e8" stroke="#702030" />
                  <path d="M2 2l6 6M8 2L2 8" stroke="#302030" strokeWidth="1.500" />
                </svg>
              </button>
              <div className="mt-[3px] w-[10px] flex-1 bg-[radial-gradient(circle,#b8b8b8_1px,transparent_1px)] bg-[length:5px_5px]" />
            </div>
            <div className="flex min-w-0 flex-1 flex-col">
              <Bar className="mb-[1px] -ml-px h-[26px]">
                <Tool icon="first" title="第一条" disabled />
                <Tool icon="prev" title="上一条" disabled />
                <Tool icon="next" title="下一条" />
                <Tool icon="last" title="最后一条" />
                <Sep />
                <span className="flex w-11">
                  <Tool icon="up" title="上移" disabled />
                  <Tool icon="down" title="下移" />
                </span>
                <Sep />
                <Tool icon="insert" label="插入" disabled />
                <Tool icon="remove" label="删除" disabled />
                <Tool icon="scale" label="缩尺配筋" />
                <Tool icon="info" label="钢筋信息" />
                <Tool icon="library" label="钢筋图库" />
                <Tool icon="other" label="其他" menu="tight" />
                <Tool label="关闭" />
                <Sep />
                <span className="pl-[5px]">单构件钢筋总重(kg)：1.249</span>
              </Bar>
              <RebarTable />
            </div>
          </div>
        </main>

        <div className="w-[2px]" />
        <PropertyPanel />
      </div>
    </div>
  );
}
